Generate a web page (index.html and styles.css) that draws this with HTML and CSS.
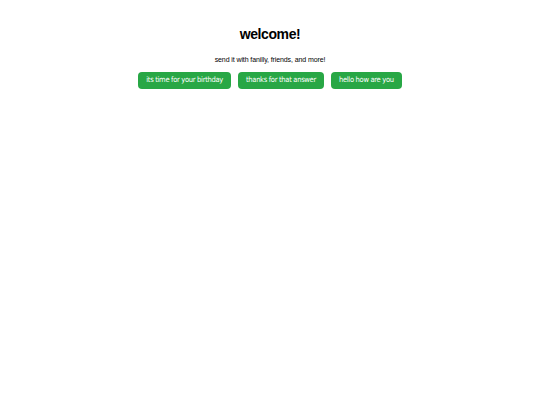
FILE: index.html
```html
<!DOCTYPE html>
<html>
<head>
<meta charset="utf-8">
<link rel="stylesheet" href="styles.css">
</head>
<body>
<div class="wrap">
  <h1 class="title">welcome!</h1>
  <p class="sub">send it with fanilly, friends, and more!</p>
  <div class="btns">
    <button class="btn">its time for your birthday</button>
    <button class="btn">thanks for that answer</button>
    <button class="btn">hello how are you</button>
  </div>
</div>
</body>
</html>
```
FILE: styles.css
```css
html, body { margin: 0; padding: 0; background: #fff; }
.wrap { display: flex; flex-direction: column; align-items: center; padding-top: 26px; font-family: "Liberation Sans", Arial, sans-serif; color: #000; }
.title { margin: 0; font-size: 14px; font-weight: bold; line-height: 16px; letter-spacing: -0.4px; }
.sub { margin: 13px 0 0; font-size: 7px; line-height: 9px; letter-spacing: -0.1px; }
.btns { display: flex; gap: 7px; margin-top: 7.5px; }
.btn { background: #28a745; color: #fff; border: none; border-radius: 4px; height: 17px; padding: 0 8px 1px; font-family: "DejaVu Sans Condensed", "DejaVu Sans", sans-serif; font-stretch: condensed; font-size: 7.5px; letter-spacing: -0.3px; line-height: 16px; }
```
